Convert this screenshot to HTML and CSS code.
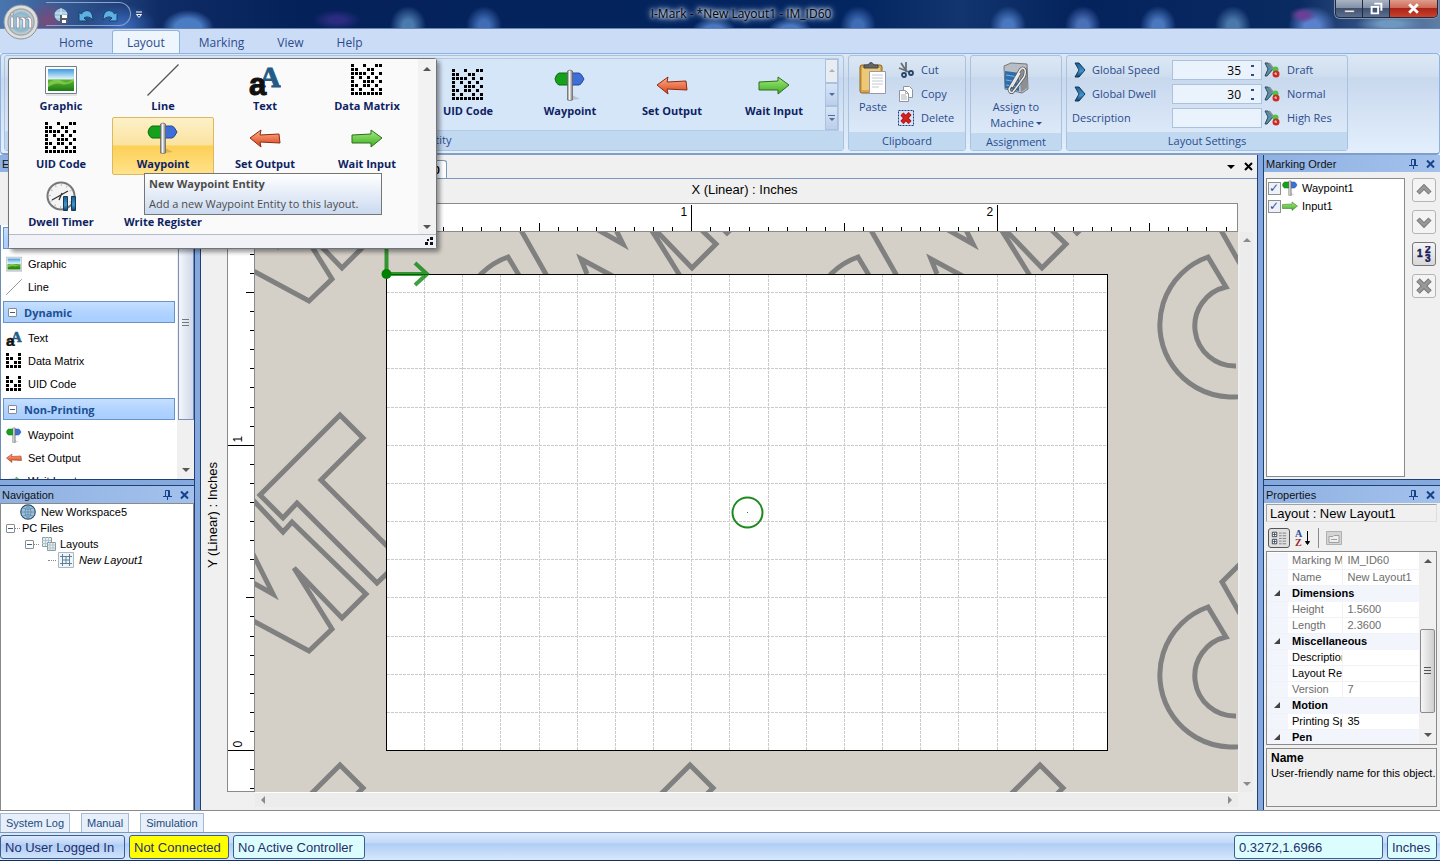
FILE: index.html
```html
<!DOCTYPE html>
<html lang="en">
<head>
    <meta charset="UTF-8">
    <meta name="viewport" content="width=device-width, initial-scale=1.0">
    <title>I-Mark - *New Layout1 - IM_ID60</title>
    <link rel="stylesheet" href="styles.css">
</head>
<body>
    <!-- Icon sprite -->
    <svg class="sprite" aria-hidden="true">
        <defs>
            <linearGradient id="sky" x1="0" y1="0" x2="0" y2="1">
                <stop offset="0" stop-color="#3d9be0"/><stop offset="0.45" stop-color="#dff2fb"/>
                <stop offset="0.5" stop-color="#5cb531"/><stop offset="1" stop-color="#1c7a16"/>
            </linearGradient>
            <linearGradient id="red" x1="0" y1="0" x2="0" y2="1">
                <stop offset="0" stop-color="#ffb08a"/><stop offset="1" stop-color="#d8411a"/>
            </linearGradient>
            <linearGradient id="green" x1="0" y1="0" x2="0" y2="1">
                <stop offset="0" stop-color="#a5ea80"/><stop offset="1" stop-color="#3fae23"/>
            </linearGradient>
            <linearGradient id="pole" x1="0" y1="0" x2="1" y2="0">
                <stop offset="0" stop-color="#777"/><stop offset="0.4" stop-color="#f4f4f4"/><stop offset="1" stop-color="#777"/>
            </linearGradient>
            <linearGradient id="blue" x1="0" y1="0" x2="0" y2="1">
                <stop offset="0" stop-color="#1f5e8c"/><stop offset="0.6" stop-color="#3f96cc"/><stop offset="1" stop-color="#123f66"/>
            </linearGradient>
            <radialGradient id="orb">
                <stop offset="0" stop-color="#b9dcea"/><stop offset="0.7" stop-color="#8db6c8"/><stop offset="1" stop-color="#d9d9d9"/>
            </radialGradient>
        </defs>
        <symbol id="i-graphic" viewBox="0 0 32 32">
            <path d="M1 31h31" stroke="#ccc" stroke-width="1"/>
            <path d="M0.5 2.5h31v27h-31z" fill="#fff" stroke="#6f7f8c"/>
            <path d="M3 5h26v22h-26z" fill="url(#sky)"/>
            <path d="M3 19q8-6 14-2t12-3v3q-8 5-13 3t-13 3z" fill="#8fd45a" opacity="0.7"/>
        </symbol>
        <symbol id="i-line" viewBox="0 0 32 32"><path d="M0.5 31.5L31.5 0.5" stroke="#555" stroke-width="1.2"/></symbol>
        <symbol id="i-text" viewBox="0 0 32 32">
            <text x="10" y="23" font-family="Liberation Serif, serif" font-weight="bold" font-size="30" fill="#245b86" stroke="#245b86">A</text>
            <text x="0" y="31" font-family="Liberation Sans, sans-serif" font-weight="bold" font-size="31" fill="#111" stroke="#111">a</text>
        </symbol>
        <symbol id="i-matrix" viewBox="0 0 32 32">
            <path stroke="#000" stroke-width="3" d="M0 1.5h3m9 0h3m9 0h3m1 0h3M0 5.5h3m1 0h3m9 0h3m1 0h3M0 9.5h3m1 0h3m1 0h3m1 0h3m5 0h3m5 0h3M0 13.5h3m5 0h3m5 0h3m5 0h3M0 17.5h3m9 0h3m1 0h3m1 0h3m5 0h3M0 21.5h3m1 0h3m5 0h3m1 0h3m5 0h3M0 25.5h3m5 0h3m9 0h3m5 0h3M0 29.5h3m1 0h3m1 0h3m1 0h3m1 0h3m1 0h3m1 0h3m1 0h3"/>
        </symbol>
        <symbol id="i-matrix-sm" viewBox="0 0 16 16">
            <path stroke="#000" stroke-width="3" d="M0 1.5h3m9 0h3M0 5.5h3m1 0h3m5 0h3M0 9.5h3m5 0h3m1 0h3M0 13.5h3m1 0h3m1 0h3m1 0h3"/>
        </symbol>
        <symbol id="i-waypoint" viewBox="0 0 32 32">
            <path d="M17 31l9-1-8-4z" fill="#000" opacity="0.15"/>
            <path d="M5 4h10v12H5q-3-1-4-6 1-5 4-6z" fill="#16a01c" stroke="#0b6d10"/>
            <path d="M17 4h8q2 0 5 6-3 6-5 6h-8z" fill="#3f6fd6" stroke="#2148a0"/>
            <path d="M13.5 2q2.5-2 5 0v29q-2.5 1-5 0z" fill="url(#pole)" stroke="#666" stroke-width="0.7"/>
        </symbol>
        <symbol id="i-out" viewBox="0 0 32 32">
            <path d="M1 16L12 8l-1 5 19-1 1 9-20-1 1 5z" fill="url(#red)" stroke="#8c2b12" stroke-linejoin="round"/>
        </symbol>
        <symbol id="i-in" viewBox="0 0 32 32">
            <path d="M31 16L20 8v4L1 13v8l19 0v4z" fill="url(#green)" stroke="#2c6e1c" stroke-linejoin="round"/>
        </symbol>
        <symbol id="i-timer" viewBox="0 0 32 32">
            <circle cx="16" cy="16" r="13.5" fill="#f3f3f3" stroke="#777" stroke-width="2"/>
            <circle cx="16" cy="16" r="11" fill="none" stroke="#bbb" stroke-dasharray="1 4.7" stroke-width="2"/>
            <path d="M7 20l16-9M14 20l3-7" stroke="#333" stroke-width="1.3"/>
            <path d="M18.5 16.5h4v14h-4zM26.5 16.5h4v14h-4z" fill="url(#blue)" stroke="#123a5c"/>
        </symbol>
        <symbol id="i-paste" viewBox="0 0 28 32">
            <rect x="1" y="3" width="22" height="28" rx="2" fill="#d9a648" stroke="#8d6420"/>
            <path d="M3 6h18v22H3z" fill="#ecc877"/>
            <path d="M5 6V3h4q3-5 6 0h4v3z" fill="#666" stroke="#444"/>
            <path d="M10.5 9.5h16v22h-16z" fill="#fff" stroke="#99a"/>
            <path d="M13 13h11M13 16h11M13 19h11M13 22h11M13 25h7" stroke="#c2cad4"/>
        </symbol>
        <symbol id="i-cut" viewBox="0 0 16 16">
            <path d="M3 1l6 9M8 0v10M1 6l10 4" stroke="#6a6f76" stroke-width="1.8"/>
            <circle cx="6" cy="13" r="2" fill="none" stroke="#26456b" stroke-width="1.8"/>
            <circle cx="13" cy="11" r="2" fill="none" stroke="#26456b" stroke-width="1.8"/>
        </symbol>
        <symbol id="i-copy" viewBox="0 0 16 16">
            <path d="M5.5 0.5h6l3 3v8h-9z" fill="#fff" stroke="#8e959c"/>
            <path d="M1.5 4.5h6l3 3v8h-9z" fill="#fff" stroke="#8e959c"/>
            <path d="M3 9h5M3 11h6M3 13h6M7.5 4.5v3h3" stroke="#aab1b8" fill="none"/>
        </symbol>
        <symbol id="i-delete" viewBox="0 0 16 16">
            <path d="M0.5 0.5h15v15h-15z" fill="none" stroke="#1c3c7c" stroke-dasharray="2 1"/>
            <path d="M4 4l8 8.5M12 3.5l-8 9" stroke="#8c0e0e" stroke-width="4.2"/>
            <path d="M4 4l8 8.5M12 3.5l-8 9" stroke="#d8201c" stroke-width="2.8"/>
        </symbol>
        <symbol id="i-assign" viewBox="0 0 28 32">
            <path d="M2 4l7-3 16 1 1 25-6 4-17-4z" fill="#b9bec4" stroke="#777"/>
            <path d="M3 9l14 2v18L3 26z" fill="#2d6fae"/>
            <path d="M4 13l12 2M4 18l12 2M4 23l12 2" stroke="#7ab7e4"/>
            <path d="M17 10l8-5v21l-6 4z" fill="#8b9096"/>
            <path d="M7 27L18 8q3-4 5 0 1 3-1 7L11 30q-3 2-4-3zM10 25l8-14" fill="none" stroke="#555" stroke-width="3"/>
            <path d="M7 27L18 8q3-4 5 0 1 3-1 7L11 30q-3 2-4-3zM10 25l8-14" fill="none" stroke="#eee" stroke-width="1.5"/>
        </symbol>
        <symbol id="i-chevron" viewBox="0 0 12 16">
            <path d="M1 1h4l6 7-6 7H1l4-7z" fill="url(#blue)" stroke="#143a5e"/>
        </symbol>
        <symbol id="i-quality" viewBox="0 0 16 16">
            <path d="M1 1h3l5 6-6 7H1l3-7z" fill="#5a8fa6" stroke="#2b4a5c"/>
            <path d="M5 1l7 9" stroke="#8a9096" stroke-width="2"/>
            <circle cx="11.5" cy="7.5" r="3" fill="#4cc44a"/>
            <circle cx="12" cy="12" r="3.5" fill="#cf2a22"/>
            <path d="M10 12l2-2 1 3z" fill="#f6d0cc"/>
        </symbol>
        <symbol id="i-pin" viewBox="0 0 9 10"><path d="M2.5 6V0.5h4V6M5.5 0v6M0 6.5h9M4.5 7v3" fill="none" stroke="#15428b"/></symbol>
        <symbol id="i-close" viewBox="0 0 9 9"><path d="M1 1l7 7M8 1L1 8" stroke="currentColor" stroke-width="2"/></symbol>
        <symbol id="i-globe" viewBox="0 0 16 16">
            <circle cx="8" cy="8" r="7.2" fill="#9fc3dc" stroke="#2e4f6b" stroke-width="1.2"/>
            <path d="M1 8h14M8 1v14M3 4q5 3 10 0M3 12q5-3 10 0M8 1q-6 7 0 14M8 1q6 7 0 14" fill="none" stroke="#5d86a8" stroke-width="0.8"/>
        </symbol>
        <symbol id="i-layouts" viewBox="0 0 16 16">
            <path d="M1.5 1.5h9v9h-9z" fill="#e8eff0" stroke="#8aa0a8"/><path d="M4.5 1v9M7.5 1v9M1 4.5h9M1 7.5h9" stroke="#b3c4ca"/>
            <path d="M6.5 6.5h8v8h-8z" fill="#e8eff0" stroke="#8aa0a8"/><path d="M9 7v7M12 7v7M7 9h7M7 12h7" stroke="#b3c4ca"/>
        </symbol>
        <symbol id="i-layout" viewBox="0 0 16 16">
            <path d="M0.5 0.5h15v15h-15z" fill="#f2f5f7" stroke="#a9b9c4"/>
            <path d="M4.5 2v12M8 4v8M11.5 2v12M2 4.5h12M4 8h8M2 11.5h12" stroke="#5d8099"/>
        </symbol>
    </svg>

    <div class="app">
        <header class="titlebar">
            <button class="orb" aria-label="Application menu">
                <svg viewBox="0 0 36 36">
                    <circle cx="18" cy="18" r="17" fill="#dcdedf" stroke="#8d9296"/>
                    <circle cx="18" cy="18" r="13" fill="url(#orb)" stroke="#a4a8ab" stroke-width="1.5"/>
                    <text x="18" y="24" text-anchor="middle" font-family="Liberation Sans, sans-serif" font-weight="bold" font-size="20" fill="#fff" stroke="#778" stroke-width="0.6">im</text>
                </svg>
            </button>
            <div class="quick">
                <button aria-label="Save"><svg viewBox="0 0 16 16"><circle cx="7" cy="7" r="6.5" fill="#9cc3dc"/><path d="M1 5h12M1 9h12M7 0v13" stroke="#dcebf4"/><path d="M6 7h8v8H6z" fill="#53606c"/><path d="M8 7h5v3H8zM8 12h4v3H8z" fill="#fff"/></svg></button>
                <button aria-label="Undo"><svg viewBox="0 0 16 16"><path d="M1 4v9h8L6 10q4-3 9 2Q15 3 9 2.5 5 2.500 3.500 6z" fill="#5fb0e2" stroke="#15446e"/></svg></button>
                <button aria-label="Redo"><svg viewBox="0 0 16 16"><path d="M15 4v9H7l3-3Q6 7 1 12 1 3 7 2.500q4 0 5.500 3.500z" fill="#5fb0e2" stroke="#15446e"/></svg></button>
            </div>
            <button class="customize" aria-label="Customize"><svg viewBox="0 0 8 8"><path d="M1 1h6" stroke="#fff"/><path d="M1.5 3.5h5L4 6.5z" fill="none" stroke="#fff"/></svg></button>
            <h1>I-Mark - *New Layout1 - IM_ID60</h1>
            <div class="win-buttons">
                <button aria-label="Minimize"><svg viewBox="0 0 12 12"><path d="M1.5 7.5h9v2h-9z" fill="#fff" stroke="#444" stroke-width="0.5"/></svg></button>
                <button aria-label="Restore"><svg viewBox="0 0 12 12"><path d="M4 1.500h6.500v6.500M1.500 4.500h6v6h-6z" fill="none" stroke="#fff" stroke-width="1.8"/></svg></button>
                <button class="win-close" aria-label="Close"><svg viewBox="0 0 12 12"><path d="M2 2l8 8M10 2l-8 8" stroke="#fff" stroke-width="2.6"/></svg></button>
            </div>
        </header>

        <nav class="tabs">
            <a href="#">Home</a>
            <a href="#" class="active">Layout</a>
            <a href="#">Marking</a>
            <a href="#">View</a>
            <a href="#">Help</a>
        </nav>

        <section class="ribbon">
            <div class="group entity">
                <div class="gallery">
                    <div class="gallery-items">
                        <button class="tile"><svg><use href="#i-graphic"/></svg>Graphic</button>
                        <button class="tile"><svg><use href="#i-line"/></svg>Line</button>
                        <button class="tile"><svg><use href="#i-text"/></svg>Text</button>
                        <button class="tile"><svg><use href="#i-matrix"/></svg>Data Matrix</button>
                        <button class="tile"><svg><use href="#i-matrix"/></svg>UID Code</button>
                        <button class="tile"><svg><use href="#i-waypoint"/></svg>Waypoint</button>
                        <button class="tile"><svg><use href="#i-out"/></svg>Set Output</button>
                        <button class="tile"><svg><use href="#i-in"/></svg>Wait Input</button>
                    </div>
                    <div class="gallery-nav">
                        <button class="off" aria-label="Previous row"><i class="tri up"></i></button>
                        <button aria-label="Next row"><i class="tri down"></i></button>
                        <button class="more" aria-label="More"><i class="tri down"></i></button>
                    </div>
                </div>
                <div class="group-title">New Entity</div>

                <!-- Expanded gallery -->
                <div class="popup">
                    <div class="popup-main">
                        <div class="popup-items">
                            <button class="tile"><svg><use href="#i-graphic"/></svg>Graphic</button>
                            <button class="tile"><svg><use href="#i-line"/></svg>Line</button>
                            <button class="tile"><svg><use href="#i-text"/></svg>Text</button>
                            <button class="tile"><svg><use href="#i-matrix"/></svg>Data Matrix</button>
                            <button class="tile"><svg><use href="#i-matrix"/></svg>UID Code</button>
                            <button class="tile selected"><svg><use href="#i-waypoint"/></svg>Waypoint</button>
                            <button class="tile"><svg><use href="#i-out"/></svg>Set Output</button>
                            <button class="tile"><svg><use href="#i-in"/></svg>Wait Input</button>
                            <button class="tile"><svg><use href="#i-timer"/></svg>Dwell Timer</button>
                            <button class="tile"><svg></svg>Write Register</button>
                        </div>
                        <div class="popup-scroll"><i class="tri up"></i><i class="tri down"></i></div>
                    </div>
                    <div class="popup-foot"><svg viewBox="0 0 8 8"><path d="M5 0h3v3H5zM0 5h3v3H0zM5 5h3v3H5zM2 2h2v2H2z" fill="#111"/></svg></div>
                    <div class="tooltip" role="tooltip">
                        <strong>New Waypoint Entity</strong>
                        <span>Add a new Waypoint Entity to this layout.</span>
                    </div>
                </div>
            </div>

            <div class="group clipboard">
                <div class="group-body">
                    <button class="big"><svg><use href="#i-paste"/></svg>Paste</button>
                    <div class="stack">
                        <button><svg><use href="#i-cut"/></svg>Cut</button>
                        <button><svg><use href="#i-copy"/></svg>Copy</button>
                        <button><svg><use href="#i-delete"/></svg>Delete</button>
                    </div>
                </div>
                <div class="group-title">Clipboard</div>
            </div>

            <div class="group assignment">
                <div class="group-body">
                    <button class="big"><svg><use href="#i-assign"/></svg>Assign to<span>Machine <i class="tri down"></i></span></button>
                </div>
                <div class="group-title">Assignment</div>
            </div>

            <div class="group settings">
                <div class="group-body">
                    <div class="fields">
                        <label for="speed"><svg><use href="#i-chevron"/></svg>Global Speed</label>
                        <div class="spin"><input id="speed" type="text" value="35"><b></b></div>
                        <label for="dwell"><svg><use href="#i-chevron"/></svg>Global Dwell</label>
                        <div class="spin"><input id="dwell" type="text" value="30"><b></b></div>
                        <label for="desc">Description</label>
                        <div class="spin"><input id="desc" type="text"></div>
                    </div>
                    <div class="stack">
                        <button><svg><use href="#i-quality"/></svg>Draft</button>
                        <button><svg><use href="#i-quality"/></svg>Normal</button>
                        <button><svg><use href="#i-quality"/></svg>High Res</button>
                    </div>
                </div>
                <div class="group-title">Layout Settings</div>
            </div>
        </section>

        <main>
            <aside class="side left">
                <section class="pane">
                    <h2>Entities</h2>
                    <div class="toolbox">
                        <div class="toolbox-bar"></div>
                        <div class="toolbox-body">
                            <div class="toolbox-list">
                                <h3><i class="minus"></i>Static</h3>
                                <ul>
                                    <li><svg><use href="#i-graphic"/></svg>Graphic</li>
                                    <li><svg><use href="#i-line"/></svg>Line</li>
                                </ul>
                                <h3><i class="minus"></i>Dynamic</h3>
                                <ul>
                                    <li><svg><use href="#i-text"/></svg>Text</li>
                                    <li><svg><use href="#i-matrix-sm"/></svg>Data Matrix</li>
                                    <li><svg><use href="#i-matrix-sm"/></svg>UID Code</li>
                                </ul>
                                <h3><i class="minus"></i>Non-Printing</h3>
                                <ul>
                                    <li><svg><use href="#i-waypoint"/></svg>Waypoint</li>
                                    <li><svg><use href="#i-out"/></svg>Set Output</li>
                                    <li><svg><use href="#i-in"/></svg>Wait Input</li>
                                </ul>
                            </div>
                            <div class="scroll toolbox-scroll"><div class="thumb"></div><i class="tri down"></i></div>
                        </div>
                    </div>
                </section>
                <section class="pane">
                    <h2>Navigation <svg><use href="#i-pin"/></svg><svg><use href="#i-close"/></svg></h2>
                    <ul class="tree">
                        <li class="l1"><svg><use href="#i-globe"/></svg>New Workspace5</li>
                        <li class="l0"><i class="minus"></i><s></s>PC Files</li>
                        <li class="l2"><i class="minus"></i><s></s><svg><use href="#i-layouts"/></svg>Layouts</li>
                        <li class="l3"><s></s><svg><use href="#i-layout"/></svg><em>New Layout1</em></li>
                    </ul>
                </section>
            </aside>

            <section class="editor">
                <div class="doc-tabs">
                    <span class="doc-tab">New Layout1 : IM_ID60</span>
                    <i class="tri down"></i>
                    <svg><use href="#i-close"/></svg>
                </div>
                <div class="work">
                    <div class="x-title">X (Linear) : Inches</div>
                    <div class="y-title"><span>Y (Linear) : Inches</span></div>
                    <svg class="x-ruler" id="x-ruler"></svg>
                    <svg class="y-ruler" id="y-ruler"></svg>
                    <svg class="canvas">
                        <defs>
                            <g id="mark">
                                <path d="M340 415L363 438L321 480L401 560L377 583L297 503L283 518L260 495Z"/>
                                <path d="M240 486L283 532L292 522L366 594L342 618L294 568L332 629L309 651L231 609L237 624M225 567L273 594L248 544"/>
                                <path d="M238 370A72 72 0 1 1 158 257L176 287A40 40 0 0 0 186 366"/>
                                <path d="M192 562L172 582L214 656"/>
                            </g>
                        </defs>
                        <g transform="translate(-255 -232)">
                            <g class="marks" id="marks"></g>
                            <rect x="386.5" y="274.5" width="721" height="476" fill="#fff" stroke="#000"/>
                            <g class="grid" id="grid"></g>
                            <g class="origin">
                                <path d="M386.5 274V232M386 274H428M415 263L427 274L415 285"/>
                                <circle cx="386.5" cy="274" r="5"/>
                            </g>
                            <circle cx="747.5" cy="512.5" r="15" fill="none" stroke="#1c8a1c" stroke-width="2"/>
                            <path d="M747 512h1v1h-1z" fill="#1c8a1c"/>
                        </g>
                    </svg>
                    <div class="v-scroll"><i class="tri up"></i><i class="tri down"></i></div>
                    <div class="h-scroll"><i class="tri lt"></i><i class="tri rt"></i></div>
                </div>
            </section>

            <aside class="side right">
                <section class="pane">
                    <h2>Marking Order <svg><use href="#i-pin"/></svg><svg><use href="#i-close"/></svg></h2>
                    <div class="order">
                        <div class="order-list">
                            <label><input type="checkbox" checked><svg><use href="#i-waypoint"/></svg>Waypoint1</label>
                            <label><input type="checkbox" checked><svg><use href="#i-in"/></svg>Input1</label>
                        </div>
                        <div class="order-buttons">
                            <button aria-label="Move up"><svg viewBox="0 0 16 16"><path d="M2 11l6-6 6 6" fill="none" stroke="#777" stroke-width="4.5"/><path d="M2.500 10.500L8 5l5.500 5.500" fill="none" stroke="#999" stroke-width="2.500"/></svg></button>
                            <button aria-label="Move down"><svg viewBox="0 0 16 16"><path d="M2 5l6 6 6-6" fill="none" stroke="#777" stroke-width="4.5"/><path d="M2.500 5.500L8 11l5.500-5.500" fill="none" stroke="#999" stroke-width="2.500"/></svg></button>
                            <button class="on" aria-label="Renumber"><svg viewBox="0 0 16 16" font-family="Liberation Sans, sans-serif" font-weight="bold" font-size="10" fill="#1d1a5e" stroke="#1d1a5e" stroke-width="0.5"><text x="1" y="11">1</text><text x="9" y="7">2</text><text x="9" y="16">3</text></svg></button>
                            <button aria-label="Remove"><svg viewBox="0 0 16 16"><path d="M2 2l12 12M14 2L2 14" stroke="#777" stroke-width="5"/><path d="M2.500 2.500l11 11M13.500 2.500l-11 11" stroke="#999" stroke-width="3"/></svg></button>
                        </div>
                    </div>
                </section>
                <section class="pane">
                    <h2>Properties <svg><use href="#i-pin"/></svg><svg><use href="#i-close"/></svg></h2>
                    <div class="props">
                        <div class="props-name">Layout : New Layout1</div>
                        <div class="props-bar">
                            <button class="on" aria-label="Categorized"><svg viewBox="0 0 18 16"><path d="M1.5 1.5h5v5h-5zM1.5 9.5h5v5h-5z" fill="#fff" stroke="#333"/><path d="M2.5 4h3M4 2.5v3M2.5 12h3M4 10.5v3" stroke="#123a8c"/><path d="M9 2.5h3m1 0h4M9 5.5h3m1 0h4M9 8.5h3m1 0h4M9 11.5h3m1 0h4M9 14.5h3m1 0h4" stroke="#777"/></svg></button>
                            <button aria-label="Alphabetical"><svg viewBox="0 0 16 16" font-family="Liberation Serif, serif" font-weight="bold" font-size="10"><text x="0" y="7" fill="#2a4a9c">A</text><text x="0" y="16" fill="#9c2a2a">Z</text><path d="M12.5 1v12M10.5 11.5l2 3 2-3z" stroke="#000"/></svg></button>
                            <hr>
                            <button aria-label="Property pages" disabled><svg viewBox="0 0 16 16"><path d="M0.5 1.5h15v13h-15z" fill="#d4d4d4" stroke="#b0b0b0"/><path d="M3 6.5h4l1-1h5v7H3zM5 9.5h6" fill="#eee" stroke="#a0a0a0"/></svg></button>
                        </div>
                        <div class="props-grid">
                            <table>
                                <tr class="ro"><td></td><th>Marking Machine</th><td>IM_ID60</td></tr>
                                <tr class="ro"><td></td><th>Name</th><td>New Layout1</td></tr>
                                <tr class="cat"><td><i class="fold"></i></td><th colspan="2">Dimensions</th></tr>
                                <tr class="ro"><td></td><th>Height</th><td>1.5600</td></tr>
                                <tr class="ro"><td></td><th>Length</th><td>2.3600</td></tr>
                                <tr class="cat"><td><i class="fold"></i></td><th colspan="2">Miscellaneous</th></tr>
                                <tr><td></td><th>Description</th><td></td></tr>
                                <tr><td></td><th>Layout Revision</th><td></td></tr>
                                <tr class="ro"><td></td><th>Version</th><td>7</td></tr>
                                <tr class="cat"><td><i class="fold"></i></td><th colspan="2">Motion</th></tr>
                                <tr><td></td><th>Printing Speed</th><td>35</td></tr>
                                <tr class="cat"><td><i class="fold"></i></td><th colspan="2">Pen</th></tr>
                            </table>
                            <div class="scroll props-scroll"><i class="tri up"></i><div class="thumb"></div><i class="tri down"></i></div>
                        </div>
                        <div class="props-help"><strong>Name</strong>User-friendly name for this object.</div>
                    </div>
                </section>
            </aside>
        </main>

        <div class="dock-tabs">
            <button>System Log</button>
            <button>Manual</button>
            <button>Simulation</button>
        </div>

        <footer class="status">
            <span class="cell user">No User Logged In</span>
            <span class="cell link">Not Connected</span>
            <span class="cell ctrl">No Active Controller</span>
            <span class="cell pos">0.3272,1.6966</span>
            <span class="cell unit">Inches</span>
        </footer>
    </div>

    <script src="script.js"></script>
</body>
</html>
```
FILE: styles.css
```css
* {
    margin: 0;
    padding: 0;
    box-sizing: border-box;
}

body {
    font-family: "Liberation Sans", Arial, sans-serif;
    font-size: 11px;
    color: #000;
    background: #fff;
}

button {
    font: inherit;
    color: inherit;
    background: none;
    border: none;
}

ul {
    list-style: none;
}

svg {
    display: block;
    flex: none;
}

.sprite {
    position: absolute;
    width: 0;
    height: 0;
}

.app {
    display: flex;
    flex-direction: column;
    height: 100vh;
    min-height: 600px;
    overflow: hidden;
}

/* Small triangles used by scroll bars and drop-downs */
.tri {
    display: block;
    width: 0;
    height: 0;
    border: 4px solid transparent;
    color: #555;
}

.tri.up {
    border-top: 0;
    border-bottom-color: currentColor;
}

.tri.down {
    border-bottom: 0;
    border-top-color: currentColor;
}

.tri.lt {
    border-left: 0;
    border-right-color: currentColor;
}

.tri.rt {
    border-right: 0;
    border-left-color: currentColor;
}

/* Title bar */
.titlebar {
    display: flex;
    align-items: flex-start;
    position: relative;
    height: 28px;
    background:
        radial-gradient(ellipse 22px 20px at 48px 20px, #7a4a78 0, transparent 100%),
        radial-gradient(ellipse 34px 22px at 122px 26px, #3b6cc0 0, transparent 100%),
        radial-gradient(ellipse 26px 18px at 188px 28px, #4a7cc4 50%, transparent 100%),
        radial-gradient(ellipse 24px 10px at 337px 20px, #2b2c80 30%, transparent 100%),
        radial-gradient(ellipse 18px 20px at 408px 26px, #4a7aae 30%, transparent 100%),
        radial-gradient(ellipse 18px 20px at 484px 26px, #3f6cb4 30%, transparent 100%),
        radial-gradient(ellipse 22px 12px at 714px 30px, #4a78c0 40%, transparent 100%),
        radial-gradient(ellipse 22px 12px at 790px 30px, #4a78c0 40%, transparent 100%),
        radial-gradient(ellipse 18px 20px at 858px 26px, #3f6cb4 30%, transparent 100%),
        radial-gradient(ellipse 18px 20px at 1008px 26px, #4a78c0 30%, transparent 100%),
        radial-gradient(ellipse 18px 20px at 1083px 26px, #4a70b8 30%, transparent 100%),
        radial-gradient(ellipse 18px 20px at 1158px 26px, #4a78c0 30%, transparent 100%),
        radial-gradient(ellipse 18px 20px at 1233px 26px, #4a78aa 30%, transparent 100%),
        radial-gradient(ellipse 14px 8px at 1303px 15px, #6c3f96 30%, transparent 100%),
        radial-gradient(ellipse 24px 20px at 1312px 26px, #5a82cc 30%, transparent 100%),
        radial-gradient(ellipse 34px 10px at 1390px 24px, #6f98c0 30%, transparent 100%),
        linear-gradient(90deg, #4a76b0 0, #102c66 160px, #05215a 300px, #032560 860px, #12356f 960px, #04225c 1080px, #0a2a62 1300px, #5f7ea6 100%);
}

.orb {
    position: absolute;
    left: 3px;
    top: 4px;
    z-index: 2;
    width: 36px;
    height: 36px;
}

.quick {
    display: flex;
    gap: 8px;
    margin: 2px 0 0 46px;
    padding: 4px 12px 0 8px;
    height: 24px;
    border: 1px solid #8ea4c6;
    border-left: none;
    border-radius: 0 12px 12px 0;
}

.quick svg {
    width: 16px;
    height: 16px;
}

.customize {
    margin: 11px 0 0 4px;
}

.customize svg {
    width: 8px;
    height: 8px;
}

.titlebar h1 {
    position: absolute;
    left: 0;
    right: 0;
    top: 5px;
    padding-left: 42px;
    text-align: center;
    font: 12px/18px "Open Sans", sans-serif;
    color: #000;
    text-shadow: 0 0 3px #c4d4ec, 0 0 4px #c4d4ec, 0 0 6px #c4d4ec, 0 0 8px #c4d4ec;
}

.win-buttons {
    display: flex;
    z-index: 1;
    margin: 0 2px 0 auto;
    border: 1px solid #1d2a40;
    border-top: none;
    border-radius: 0 0 5px 5px;
    overflow: hidden;
    box-shadow: 0 0 0 1px #7f93b0;
}

.win-buttons button {
    width: 27px;
    height: 17px;
    padding: 1px 7px;
    border-right: 1px solid #1d2a40;
    background: linear-gradient(#a9b3c2 0, #8390a6 45%, #3f5070 50%, #5d6f90 100%);
}

.win-buttons svg {
    width: 13px;
    height: 13px;
}

.win-buttons .win-close {
    width: 47px;
    padding: 1px 17px;
    border-right: none;
    background: linear-gradient(#e09c8c 0, #cc6a58 45%, #ac2417 50%, #c9422c 100%);
}

/* Ribbon */
.tabs {
    display: flex;
    gap: 5px;
    height: 25px;
    padding: 1px 0 0 45px;
    background: #cbddf6;
    border-top: 1px solid #6c84ad;
    font: 12px/25px "Open Sans", sans-serif;
}

.tabs a {
    padding: 0 14px;
    color: #2b4c8c;
    text-decoration: none;
}

.tabs .active {
    background: #eff5fd;
    border: 1px solid #8db2e3;
    border-bottom: none;
    border-radius: 3px 3px 0 0;
    line-height: 23px;
}

.ribbon {
    display: flex;
    gap: 4px;
    height: 102px;
    padding: 1px 3px;
    border: 1px solid #8db2e3;
    border-bottom: 2px solid #7f9fc8;
    border-radius: 4px;
    background: linear-gradient(#dde8f5 0, #cfdeef 22px, #c8d8ed 24px, #e3effd 100%);
    font: 11px/16px "Open Sans", sans-serif;
    color: #2b4c8c;
}

.group {
    display: flex;
    flex-direction: column;
    position: relative;
    height: 96px;
    border: 1px solid #a9c2e0;
    border-radius: 3px;
}

.group-title {
    height: 19px;
    line-height: 17px;
    background: #c1d8f1;
    text-align: center;
}

.entity {
    width: 840px;
}

.gallery {
    display: flex;
    flex: 1;
    margin: 2px 4px 0 3px;
    border: 1px solid #b4c9e4;
    background: #d5e6f9;
}

.gallery-items {
    display: grid;
    grid-template-columns: repeat(8, 102px);
    flex: 1;
    padding-top: 5px;
}

.gallery-nav {
    display: flex;
    flex-direction: column;
    width: 15px;
}

.gallery-nav button {
    display: flex;
    flex: 1;
    flex-direction: column;
    gap: 2px;
    align-items: center;
    justify-content: center;
    border: 1px solid #a9c2e0;
    background: linear-gradient(#d6e4f6, #bccfea);
}

.gallery-nav .off {
    background: #e9edf2;
}

.gallery-nav .tri {
    border-width: 3px;
    border-bottom-width: 0;
    color: #4c6fa8;
}

.gallery-nav .off .tri {
    border-bottom-width: 3px;
    border-top-width: 0;
    color: #a8b2bf;
}

.gallery-nav .more::before {
    content: "";
    width: 7px;
    height: 1px;
    background: #4c6fa8;
}

.tile {
    display: flex;
    flex-direction: column;
    align-items: center;
    gap: 2px;
    height: 58px;
    padding-top: 4px;
    font-family: "Open Sans", sans-serif;
    font-size: 11px;
    font-weight: bold;
    line-height: 16px;
    color: #0f1f63;
    border: 1px solid transparent;
    border-radius: 2px;
    white-space: nowrap;
}

.tile svg {
    width: 32px;
    height: 32px;
}

.tile.selected {
    border-color: #dcb85e;
    background: linear-gradient(#fdf1c8 0, #fbe3a0 48%, #fdd055 50%, #ffe28c 100%);
}

.popup {
    position: absolute;
    left: 3px;
    top: 2px;
    z-index: 10;
    width: 429px;
    border: 1px solid #6f737b;
    border-radius: 3px;
    background: #fafafa;
    box-shadow: 3px 3px 4px rgba(0, 0, 0, 0.4);
}

.popup-main {
    display: flex;
    height: 175px;
}

.popup-items {
    display: grid;
    grid-template-columns: repeat(4, 102px);
    grid-auto-rows: 58px;
    padding-left: 1px;
    flex: 1;
}

.popup-scroll {
    display: flex;
    flex-direction: column;
    justify-content: space-between;
    align-items: center;
    width: 19px;
    padding: 8px 0 5px;
    background: #f2f2f2;
}

.popup-foot {
    display: flex;
    justify-content: flex-end;
    align-items: flex-end;
    height: 14px;
    padding: 3px;
    border-top: 1px solid #b6bcc6;
    background: #f0f2f7;
}

.popup-foot svg {
    width: 8px;
    height: 8px;
}

.tooltip {
    position: absolute;
    left: 135px;
    top: 114px;
    display: flex;
    flex-direction: column;
    width: 238px;
    height: 42px;
    padding: 0 4px;
    border: 1px solid #767676;
    background: linear-gradient(#fff, #cbdaf0);
    color: #4c4c4c;
    line-height: 20px;
    white-space: nowrap;
}

.group-body {
    display: flex;
    flex: 1;
    padding: 2px 3px;
}

.clipboard {
    width: 118px;
}

.assignment {
    width: 92px;
}

.settings {
    width: 282px;
}

.big {
    display: flex;
    flex-direction: column;
    align-items: center;
    flex: none;
    width: 42px;
    padding-top: 4px;
}

.big svg {
    width: 28px;
    height: 32px;
    margin-bottom: 5px;
}

.assignment .big {
    width: 100%;
}

.big span {
    display: flex;
    align-items: center;
    gap: 2px;
}

.big .tri {
    border-width: 3px;
    border-bottom-width: 0;
    color: #2b4c8c;
}

.stack {
    display: flex;
    flex-direction: column;
}

.stack button {
    display: flex;
    align-items: center;
    gap: 7px;
    height: 24px;
    padding-left: 4px;
}

.settings .stack button {
    padding-left: 2px;
}

.stack svg {
    width: 16px;
    height: 16px;
}

.fields {
    display: grid;
    grid-template-columns: 102px 90px;
    grid-auto-rows: 24px;
    align-items: center;
}

.fields label {
    display: flex;
    align-items: center;
    gap: 6px;
    padding-left: 2px;
}

.fields label svg {
    width: 12px;
    height: 16px;
    margin-left: 2px;
}

.spin {
    position: relative;
}

.spin input {
    width: 90px;
    height: 20px;
    padding-right: 20px;
    border: 1px solid #abc1de;
    background: #eaf2fb;
    font: 12px "Open Sans", sans-serif;
    color: #000;
    text-align: right;
}

.spin b {
    position: absolute;
    right: 8px;
    top: 5px;
    width: 3px;
    height: 11px;
    border-top: 2px solid #2b4c8c;
    border-bottom: 2px solid #2b4c8c;
}

/* Main area */
main {
    display: grid;
    grid-template-columns: 195px minmax(0, 1fr) 177px;
    column-gap: 5px;
    flex: 1;
    min-height: 0;
    background: #85a9dd;
    border-bottom: 1px solid #8a8a8a;
}

.side {
    display: flex;
    flex-direction: column;
    gap: 5px;
    min-height: 0;
    border-right: 1px solid #1f3f77;
}

.side.right {
    border-right: none;
    border-left: 1px solid #1f3f77;
}

.pane {
    display: flex;
    flex: 1;
    flex-direction: column;
    min-height: 0;
    background: #f0f0f0;
    border-bottom: 1px solid #1f3f77;
}

.pane + .pane {
    border-top: 1px solid #1f3f77;
    border-bottom: none;
}

.pane h2 {
    display: flex;
    align-items: center;
    gap: 8px;
    flex: none;
    height: 17px;
    padding: 0 5px 0 2px;
    background: linear-gradient(90deg, #8fb1e2, #a3c1ec);
    font-size: 11px;
    font-weight: normal;
    color: #111;
}

.pane h2 svg {
    width: 9px;
    height: 10px;
    color: #15428b;
}

.pane h2 svg:first-of-type {
    margin-left: auto;
}

.toolbox {
    display: flex;
    flex: 1;
    flex-direction: column;
    min-height: 0;
}

.toolbox-bar {
    flex: none;
    height: 53px;
}

.toolbox-body {
    display: flex;
    flex: 1;
    min-height: 0;
    background: #fff;
    border-left: 1px solid #6d8cb8;
}

.toolbox-list {
    flex: 1;
    padding: 2px;
    overflow: hidden;
}

.toolbox h3 {
    display: flex;
    align-items: center;
    gap: 7px;
    height: 22px;
    padding-left: 4px;
    border: 1px solid #6a93c8;
    background: linear-gradient(#c6dfff 0, #b0d3ff 55%, #a9ceff 100%);
    font: bold 11px "Open Sans", sans-serif;
    color: #1d4f91;
}

.toolbox ul {
    padding: 3px 0;
}

.toolbox li {
    display: flex;
    align-items: center;
    gap: 6px;
    height: 23px;
    padding-left: 3px;
}

.toolbox li svg {
    width: 16px;
    height: 16px;
}

.minus {
    flex: none;
    width: 9px;
    height: 9px;
    border: 1px solid #8c8c8c;
    border-radius: 1px;
    background: linear-gradient(#3d5b95, #3d5b95) center / 5px 1px no-repeat #fff;
}

.scroll {
    display: flex;
    flex-direction: column;
    align-items: center;
    background: #f0f0f0;
}

.thumb {
    border: 1px solid #7a8fb8;
    background:
        repeating-linear-gradient(#777 0 1px, transparent 1px 3px) center / 7px 8px no-repeat,
        linear-gradient(90deg, #f4f6fb, #cfd8ea);
}

.toolbox-scroll {
    width: 17px;
    padding-bottom: 7px;
}

.toolbox-scroll .thumb {
    width: 16px;
    flex: 1;
    margin-bottom: 48px;
}

.tree {
    flex: 1;
    background: #fff;
    border: 1px solid #8a8a8a;
    border-bottom: none;
}

.tree li {
    display: flex;
    align-items: center;
    height: 16px;
}

.tree svg {
    width: 16px;
    height: 16px;
    margin-right: 5px;
}

.tree s {
    width: 5px;
    margin-right: 2px;
    border-top: 1px dotted #888;
}

.tree .l0 {
    padding-left: 5px;
}

.tree .l1 {
    padding-left: 19px;
}

.tree .l2 {
    padding-left: 24px;
}

.tree .l2 svg {
    margin-right: 3px;
}

.tree .l3 {
    padding-left: 47px;
}

.tree .l3 s {
    width: 8px;
}

/* Document editor */
.editor {
    display: flex;
    flex-direction: column;
    min-width: 0;
    background: #f0f0f0;
    border-left: 1px solid #1f3f77;
    border-right: 1px solid #1f3f77;
}

.doc-tabs {
    display: flex;
    align-items: center;
    gap: 9px;
    height: 24px;
    padding-right: 4px;
    border-bottom: 1px solid #7a99bc;
}

.doc-tabs .tri {
    margin-left: auto;
    color: #000;
}

.doc-tabs svg {
    width: 9px;
    height: 9px;
}

.doc-tab {
    align-self: flex-end;
    width: 246px;
    height: 18px;
    padding-right: 6px;
    border: 1px solid #7a99bc;
    border-bottom: none;
    border-radius: 0 3px 0 0;
    background: #fff;
    font-weight: bold;
    line-height: 18px;
    text-align: right;
}

.work {
    display: grid;
    grid-template-columns: 26px 28px minmax(0, 1fr) 19px;
    grid-template-rows: 24px 29px minmax(0, 1fr) 18px;
    flex: 1;
    min-height: 0;
}

.x-title,
.y-title {
    font-size: 13px;
}

.x-title {
    grid-area: 1 / 3;
    padding-right: 4px;
    line-height: 22px;
    text-align: center;
}

.y-title {
    grid-area: 3 / 1;
    display: flex;
    align-items: center;
    justify-content: center;
    padding: 5px 3px 0 0;
}

.y-title span {
    writing-mode: vertical-rl;
    transform: rotate(180deg);
}

.x-ruler,
.y-ruler {
    background: #fff;
    font-size: 12px;
}

.x-ruler {
    grid-area: 2 / 2 / 3 / 4;
    width: 100%;
    height: 100%;
    border: 1px solid #8a8a8a;
}

.y-ruler {
    grid-area: 3 / 2;
    width: 100%;
    height: 100%;
    border: 1px solid #8a8a8a;
    border-top: none;
}

.x-ruler line,
.y-ruler line {
    stroke: #000;
}

.canvas {
    grid-area: 3 / 3;
    width: 100%;
    height: 100%;
    background: #d4d0c8;
}

.marks {
    fill: none;
    stroke: #808080;
    stroke-width: 5;
}

.grid line {
    stroke: #cbcbcb;
    stroke-dasharray: 3 1;
}

.origin path {
    fill: none;
    stroke: #008000;
    stroke-opacity: 0.75;
    stroke-width: 4;
}

.origin circle {
    fill: #008000;
}

.v-scroll,
.h-scroll {
    display: flex;
    justify-content: space-between;
    align-items: center;
    padding: 6px;
    background: #ececec;
}

.v-scroll {
    grid-area: 3 / 4;
    flex-direction: column;
    margin: 0 4px 0 2px;
}

.h-scroll {
    grid-area: 4 / 3;
    margin-bottom: 3px;
    border-top: 1px solid #fff;
}

.v-scroll .tri,
.h-scroll .tri {
    color: #8a8a8a;
}

/* Marking order */
.order {
    display: flex;
    gap: 7px;
    flex: 1;
    padding: 6px 4px 2px 2px;
}

.order-list {
    flex: 1;
    border: 1px solid #8a8a8a;
    background: #fff;
}

.order-list label {
    display: flex;
    align-items: center;
    height: 18px;
    padding-left: 1px;
}

.order-list input {
    appearance: none;
    width: 13px;
    height: 13px;
    margin-right: 1px;
    border: 1px solid #8e8f8f;
    background: #eef1f8;
}

.order-list input:checked::before {
    content: "✓";
    display: block;
    font: bold 12px/11px "DejaVu Sans", sans-serif;
    color: #33519c;
}

.order-list svg {
    width: 16px;
    height: 16px;
    margin-right: 4px;
}

.order-buttons {
    display: flex;
    flex-direction: column;
    gap: 8px;
    width: 24px;
}

.order-buttons button {
    height: 24px;
    padding: 3px;
    border: 1px solid #b4b4b4;
    border-radius: 3px;
    background: #f4f4f4;
}

.order-buttons .on {
    border-color: #777;
    background: linear-gradient(#f4f4f4, #d8d8d8);
}

.order-buttons svg {
    width: 16px;
    height: 16px;
}

/* Properties */
.props {
    display: flex;
    flex: 1;
    flex-direction: column;
    min-height: 0;
    padding: 1px 3px 3px 2px;
}

.props-name {
    flex: none;
    height: 18px;
    padding-left: 3px;
    border: 1px solid #a0a0a0;
    border-right-color: #ddd;
    border-bottom-color: #ddd;
    font-size: 13px;
    line-height: 17px;
}

.props-bar {
    display: flex;
    align-items: center;
    gap: 2px;
    flex: none;
    height: 29px;
    padding: 3px 2px 0;
}

.props-bar button {
    height: 20px;
    padding: 1px 2px;
    border: 1px solid transparent;
    border-radius: 3px;
}

.props-bar .on {
    border-color: #555;
    background: #e0e0e0;
}

.props-bar svg {
    width: 16px;
    height: 16px;
}

.props-bar hr {
    width: 1px;
    height: 20px;
    margin: 0 2px;
    border: none;
    background: #8a8a8a;
}

.props-grid {
    display: flex;
    flex: 1;
    min-height: 0;
    overflow: hidden;
    border: 1px solid #8a8a8a;
    background: #fff;
}

.props-grid table {
    flex: 1;
    align-self: flex-start;
    table-layout: fixed;
    width: 152px;
    margin-top: 1px;
    border-collapse: collapse;
}

.props-grid tr {
    height: 16px;
}

.props-grid td,
.props-grid th {
    height: 16px;
    padding-left: 5px;
    border-bottom: 1px solid #f0f2f6;
    font-weight: normal;
    line-height: 15px;
    text-align: left;
    white-space: nowrap;
    overflow: hidden;
}

.props-grid th {
    width: 54px;
    padding-left: 4px;
    border-right: 1px solid #f0f2f6;
}

.props-grid td:first-child {
    width: 21px;
    padding-left: 7px;
    background: #f2f5fb;
}

.props-grid .ro {
    color: #6d6d6d;
}

.props-grid .cat th {
    background: #f2f5fb;
    border-color: #f2f5fb;
    font-weight: bold;
}

.fold {
    display: block;
    width: 0;
    height: 0;
    border-left: 6px solid transparent;
    border-bottom: 6px solid #444;
}

.props-scroll {
    justify-content: space-between;
    flex: none;
    width: 17px;
    padding: 7px 1px;
}

.props-scroll .thumb {
    width: 15px;
    height: 84px;
    margin-top: 46px;
    border-color: #8a8a8a;
    border-radius: 2px;
    background:
        repeating-linear-gradient(#555 0 1px, transparent 1px 3px) center / 7px 8px no-repeat,
        linear-gradient(90deg, #f6f6f6, #cfcfcf);
}

.props-help {
    flex: none;
    height: 59px;
    margin-top: 3px;
    padding: 2px 4px;
    border: 1px solid #8a8a8a;
    line-height: 15px;
    white-space: nowrap;
}

.props-help strong {
    display: block;
    font-size: 12px;
}

/* Bottom bars */
.dock-tabs {
    display: flex;
    gap: 11px;
    height: 22px;
    padding-top: 2px;
    border-bottom: 1px solid #7a99bc;
}

.dock-tabs button {
    padding: 0 5px;
    border: 1px solid #a3bcd4;
    border-bottom: none;
    background: #e6effa;
    color: #234b7c;
}

.status {
    display: flex;
    gap: 4px;
    height: 28px;
    padding: 2px 3px 2px 0;
    border-bottom: 1px solid #16305e;
    background: linear-gradient(#dbe9fc 0, #c4dafa 35%, #aecdf5 40%, #d8e8fd 100%);
}

.cell {
    height: 24px;
    padding: 0 4px;
    border: 1px solid #3c5f8c;
    border-radius: 3px;
    background: #dcfdfd;
    color: #1f2f6b;
    font-size: 13px;
    line-height: 23px;
    white-space: nowrap;
}

.user {
    width: 125px;
    background: linear-gradient(#dbe9fc 0, #bed5f8 35%, #aecdf5 40%, #cfe2fc 100%);
}

.link {
    width: 100px;
    background: #ff0;
}

.ctrl {
    width: 132px;
}

.pos {
    width: 149px;
    margin-left: auto;
}

.unit {
    width: 50px;
}
```
FILE: script.js
```js
const NS = 'http://www.w3.org/2000/svg';
const INCH = 305.3;

function add(parent, name, attrs) {
    const el = document.createElementNS(NS, name);
    for (const key in attrs) el.setAttribute(key, attrs[key]);
    parent.appendChild(el);
    return el;
}

// Tick length in 1/16 inch steps
function tickLength(i) {
    if (i % 16 === 0) return 26;
    return i % 8 === 0 ? 8 : 4;
}

const xRuler = document.getElementById('x-ruler');
for (let i = -8; i < 48; i++) {
    const x = Math.round(158 + i * INCH / 16) + 0.5;
    add(xRuler, 'line', { x1: x, x2: x, y1: 27 - tickLength(i), y2: 27 });
    if (i % 16 === 0) add(xRuler, 'text', { x: x - 11, y: 12 }).textContent = i / 16;
}

const yRuler = document.getElementById('y-ruler');
for (let i = -8; i < 28; i++) {
    const y = Math.round(518 - i * INCH / 16) + 0.5;
    add(yRuler, 'line', { x1: 26 - tickLength(i), x2: 26, y1: y, y2: y });
    if (i % 16 === 0) {
        add(yRuler, 'text', { transform: `translate(14 ${y - 3}) rotate(-90)` }).textContent = i / 16;
    }
}

// Eighth-inch grid inside the 2.36 x 1.56 layout
const grid = document.getElementById('grid');
for (let i = 1; i < 19; i++) {
    const x = Math.round(386 + i * INCH / 8) + 0.5;
    add(grid, 'line', { x1: x, x2: x, y1: 275, y2: 750 });
}
for (let i = 1; i < 13; i++) {
    const y = Math.round(750 - i * INCH / 8) + 0.5;
    add(grid, 'line', { x1: 387, x2: 1107, y1: y, y2: y });
}

// Watermark tiles
const marks = document.getElementById('marks');
for (let row = -1; row < 3; row++) {
    for (let col = -1; col < 5; col++) {
        add(marks, 'use', { href: '#mark', x: col * 350, y: row * 350 });
    }
}
```
